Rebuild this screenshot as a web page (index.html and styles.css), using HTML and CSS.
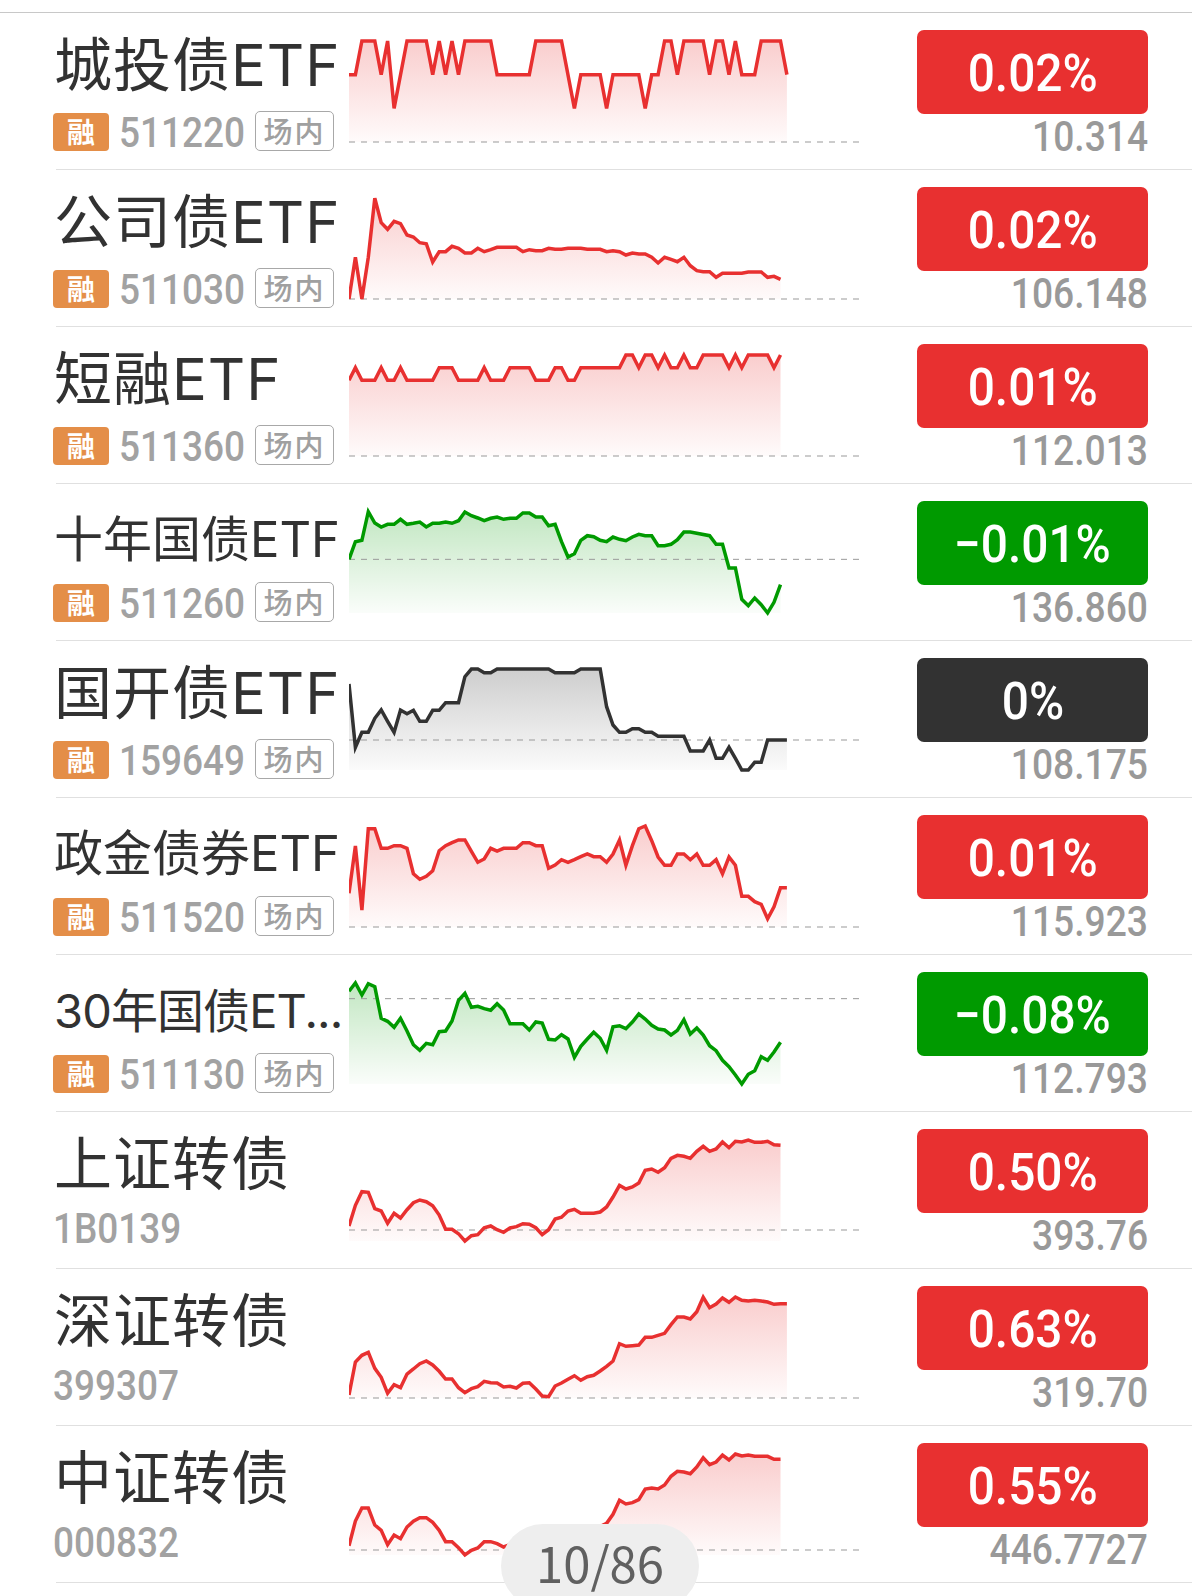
FILE: index.html
```html
<!DOCTYPE html>
<html lang="zh-CN">

<head>
    <meta charset="UTF-8">
    <meta name="viewport" content="width=device-width, initial-scale=1.0">
    <title>债券ETF</title>
    <link rel="stylesheet" href="styles.css">
</head>

<body>
    <div class="list" id="list"></div>
    <div class="pager">10/86</div>

    <script src="script.js"></script>
</body>

</html>
```

FILE: styles.css
```css
body {
    margin: 0;
    height: 1596px;
    overflow: hidden;
    background: #fff;
    font-family: "Noto Sans CJK SC", sans-serif;
}

.list {
    margin-top: 12px;
    border-top: 1px solid #c8c8c8;
}

.row {
    display: flex;
    box-sizing: border-box;
    height: 157px;
    margin-left: 56px;
    border-bottom: 1px solid #e0e0e0;
}

.info {
    width: 293px;
    flex: none;
}

.name {
    height: 80px;
    margin: 12px 0 0 -2px;
    line-height: 80px;
    font-family: Inter, "Noto Sans CJK SC", sans-serif;
    font-size: 58px;
    letter-spacing: 1px;
    color: #323232;
    white-space: nowrap;
}

.name.medium {
    font-size: 49px;
    line-height: 88px;
    letter-spacing: 0;
}

.name.small {
    font-size: 47px;
    line-height: 87px;
    letter-spacing: -0.9px;
}

.meta {
    display: flex;
    align-items: flex-end;
    height: 40px;
    margin: 6px 0 0 -3px;
}

.margin-badge {
    width: 56px;
    height: 38px;
    line-height: 36px;
    border-radius: 4px;
    background: #e48e48;
    color: #fff;
    font-size: 28px;
    font-weight: bold;
    text-align: center;
}

.code {
    width: 146px;
    height: 40px;
    line-height: 38px;
    font-family: Roboto, sans-serif;
    font-size: 42px;
    font-weight: 500;
    color: #a2a2a2;
}

.code span,
.price span,
.change span {
    display: inline-block;
    transform: scaleX(0.88);
    transform-origin: left;
}

.margin-badge + .code {
    padding-left: 10px;
    width: 136px;
    line-height: 44px;
}

.market-tag {
    box-sizing: border-box;
    width: 79px;
    height: 40px;
    line-height: 36px;
    border: 1px solid #a8a8a8;
    border-radius: 5px;
    color: #a0a0a0;
    font-size: 29px;
    font-weight: 500;
    letter-spacing: 2px;
    text-align: center;
}

.chart {
    flex: none;
    width: 511px;
    height: 156px;
}

.chart .line {
    fill: none;
    stroke: currentColor;
    stroke-width: 3.5;
}

.chart .base {
    stroke: #999;
    stroke-width: 1;
    stroke-dasharray: 6 6;
}

.up .chart {
    color: #e83030;
}

.down .chart {
    color: #009a00;
}

.flat .chart {
    color: #323232;
}

.quote {
    width: 231px;
    margin: 17px 44px 0 auto;
}

.change {
    height: 84px;
    line-height: 87px;
    border-radius: 7px;
    color: #fff;
    font-family: Roboto, sans-serif;
    font-size: 52px;
    font-weight: 500;
    text-align: center;
}

.change span {
    transform: scaleX(0.92);
    transform-origin: center;
}

.up .change {
    background: #e83030;
}

.down .change {
    background: #009a00;
}

.flat .change {
    background: #323232;
}

.price {
    line-height: 46px;
    font-family: Roboto, sans-serif;
    font-size: 42px;
    font-weight: 500;
    color: #999;
    text-align: right;
}

.price span {
    transform: scaleX(0.885);
    transform-origin: right;
}

/* Position indicator floating over the list */
.pager {
    position: fixed;
    left: 501px;
    top: 1524px;
    box-sizing: border-box;
    width: 198px;
    height: 84px;
    padding-top: 13px;
    line-height: 50px;
    border-radius: 42px;
    background: #eee;
    color: #606060;
    font-size: 49px;
    text-align: center;
}
```

FILE: script.js
```js
// Each point is "index,value"; values run from 0 (chart floor) to 303
const rows = [
    {
        name: '城投债ETF', code: '511220', tag: true, trend: 'up', change: '0.02%', price: '10.314', base: 0,
        points: '0,202 1,202 2,303 4,303 5,202 6,303 7,101 9,303 12,303 13,202 14,303 15,202 16,303 17,202 18,303 22,303 23,202 28,202 29,303 33,303 35,101 36,202 39,202 40,101 41,202 45,202 46,101 47,202 48,202 49,303 50,303 51,202 52,303 55,303 56,202 57,303 58,303 59,202 60,303 61,202 63,202 64,303 67,303 68,202'
    },
    {
        name: '公司债ETF', code: '511030', tag: true, trend: 'up', change: '0.02%', price: '106.148', base: 0,
        points: '0,0 1,125 2,0 3,125 4,302 5,229 6,209 7,233 8,226 9,192 10,186 11,169 12,166 13,111 14,142 15,142 16,158 17,152 18,138 19,138 20,152 21,142 22,148 23,155 26,155 27,142 28,148 29,145 30,145 31,152 32,149 33,149 34,152 36,152 37,149 39,149 40,142 41,145 42,142 43,132 44,138 45,135 46,135 47,125 48,108 49,125 50,119 51,112 52,125 53,100 54,85 55,82 56,82 57,65 58,77 61,77 62,81 64,81 65,65 66,68 67,59'
    },
    {
        name: '短融ETF', code: '511360', tag: true, trend: 'up', change: '0.01%', price: '112.013', base: 0,
        points: '0,227 1,265 2,227 4,227 5,265 6,227 7,227 8,265 9,227 13,227 14,265 16,265 17,227 20,227 21,265 22,227 24,227 25,265 28,265 29,227 31,227 32,265 33,265 34,227 35,227 36,265 42,265 43,303 44,303 45,265 46,303 47,303 48,265 49,303 50,265 51,265 52,303 53,265 54,265 55,303 58,303 59,265 60,303 61,265 62,303 65,303 66,265 67,303'
    },
    {
        name: '十年国债ETF', size: 'medium', code: '511260', tag: true, trend: 'down', change: '−0.01%', price: '136.860', base: 161,
        points: '0,161 1,214 2,218 3,304 4,270 5,258 6,266 7,266 8,281 9,266 10,269 11,273 12,258 13,269 14,269 15,273 16,269 17,277 18,303 19,292 20,285 21,277 22,284 23,288 24,281 25,284 26,284 27,300 28,300 29,288 30,288 31,262 32,266 33,214 34,168 35,178 36,218 37,232 38,229 39,218 40,214 41,228 42,221 43,217 44,228 45,236 46,232 47,232 48,202 49,202 50,206 51,220 52,243 53,243 56,232 57,206 58,206 59,135 60,135 61,41 62,22 63,45 64,25 65,0 66,32 67,85'
    },
    {
        name: '国开债ETF', code: '159649', tag: true, trend: 'flat', change: '0%', price: '108.175', base: 90,
        points: '0,258 1,68 2,113 3,113 4,155 5,180 6,146 7,113 8,180 9,169 10,179 11,146 12,146 13,179 14,179 15,202 17,202 18,280 19,303 20,303 21,292 22,292 23,303 31,303 32,292 35,292 36,303 39,303 40,190 41,135 42,113 43,113 44,124 45,124 46,113 47,113 48,101 52,101 53,57 55,57 56,90 57,35 58,35 59,68 60,35 61,0 62,0 63,23 64,23 65,90 68,90'
    },
    {
        name: '政金债券ETF', size: 'medium', code: '511520', tag: true, trend: 'up', change: '0.01%', price: '115.923', base: 0,
        points: '0,101 1,243 2,51 3,295 4,295 5,236 6,236 7,244 8,244 9,236 10,160 11,143 12,152 13,169 14,229 15,244 16,253 17,261 18,261 19,227 20,194 21,204 22,236 23,228 24,236 26,236 27,253 28,253 29,244 30,244 31,176 32,186 33,202 34,194 35,202 36,211 37,219 38,211 39,211 40,194 41,219 42,261 43,185 44,244 45,295 46,303 47,259 48,210 49,185 50,185 51,219 52,219 53,202 54,219 55,185 56,185 57,202 58,160 59,210 60,185 61,92 62,92 63,76 64,68 65,25 66,61 67,118 68,118'
    },
    {
        name: '30年国债ET...', size: 'small', code: '511130', tag: true, trend: 'down', change: '−0.08%', price: '112.793', base: 256,
        points: '0,278 1,303 2,267 3,301 4,292 5,197 6,188 7,170 8,197 9,159 10,118 11,101 12,122 13,118 14,157 15,159 16,189 17,251 18,272 19,230 20,233 21,226 22,221 23,241 24,222 25,181 27,181 28,162 29,186 30,183 31,134 32,132 33,148 34,135 35,80 36,113 37,135 38,155 39,137 40,101 41,172 42,175 43,166 44,186 45,210 46,195 47,176 48,165 49,162 50,147 51,161 52,193 53,150 54,168 55,147 56,115 57,100 58,71 59,52 60,27 61,0 62,29 63,40 64,82 65,71 66,96 67,125'
    },
    {
        name: '上证转债', code: '1B0139', trend: 'up', change: '0.50%', price: '393.76', base: 33,
        points: '0,45 1,107 2,148 3,146 4,97 5,90 6,53 7,83 8,69 9,94 10,115 11,123 12,118 13,106 14,78 15,35 16,35 17,22 18,0 19,16 20,19 21,40 22,45 23,34 24,26 25,39 26,43 27,52 28,50 29,40 30,19 31,34 32,66 33,71 34,90 35,95 36,83 38,83 39,87 40,102 41,132 42,167 43,156 44,162 45,174 46,212 47,216 48,206 49,220 50,248 51,257 52,254 53,248 54,269 55,284 56,269 57,276 58,297 59,280 60,299 61,297 62,303 63,296 64,296 65,299 66,289 67,287'
    },
    {
        name: '深证转债', code: '399307', trend: 'up', change: '0.63%', price: '319.70', base: 0,
        points: '0,9 1,108 2,128 3,137 4,89 5,62 6,14 7,40 8,31 9,72 10,87 11,103 12,111 13,99 14,80 15,57 16,57 17,31 18,16 19,28 20,34 21,50 22,46 23,45 24,33 25,35 26,30 27,44 28,46 29,27 30,6 31,4 32,36 33,45 34,56 35,67 36,53 37,64 38,68 39,81 40,95 41,111 42,163 43,155 44,157 45,159 46,182 47,182 48,188 49,194 50,220 51,243 52,243 53,237 54,259 55,302 56,271 57,282 58,300 59,287 60,303 61,293 62,291 63,293 64,291 65,288 66,281 67,283 68,283'
    },
    {
        name: '中证转债', code: '000832', trend: 'up', change: '0.55%', price: '446.7727', base: 15,
        points: '0,28 1,102 2,141 3,141 4,90 5,74 6,31 7,60 8,49 9,84 10,101 11,112 12,112 13,98 14,74 15,40 16,40 17,22 18,0 19,14 20,21 21,40 22,40 23,34 24,24 27,45 30,14 34,70 38,76 40,95 41,122 42,164 43,153 44,157 45,166 46,198 47,201 48,198 49,210 50,236 51,251 52,249 53,244 54,264 55,292 56,271 57,279 58,300 59,285 60,303 61,297 62,300 63,296 65,296 66,287 67,287'
    }
];

const STEP = 6.44;
const TOP = 28;
const FLOOR = 129;

// Value to pixel position inside the row
function toY(value) {
    return FLOOR - value / 3;
}

function drawChart(row, index) {
    const points = row.points.split(' ').map(pair => {
        const [i, value] = pair.split(',').map(Number);
        return [(i * STEP).toFixed(1), toY(value).toFixed(1)];
    });
    const line = points.map(p => p.join(',')).join(' ');
    const lastX = points[points.length - 1][0];

    return `
        <svg class="chart" viewBox="0 0 511 156">
            <defs>
                <linearGradient id="fill-${index}" gradientUnits="userSpaceOnUse" x1="0" y1="${TOP}" x2="0" y2="${FLOOR}">
                    <stop offset="0" stop-color="currentColor" stop-opacity="0.24"/>
                    <stop offset="1" stop-color="currentColor" stop-opacity="0.02"/>
                </linearGradient>
            </defs>
            <polygon points="0,${FLOOR} ${line} ${lastX},${FLOOR}" fill="url(#fill-${index})"/>
            <line class="base" x1="0" y1="${toY(row.base)}" x2="511" y2="${toY(row.base)}"/>
            <polyline class="line" points="${line}"/>
        </svg>
    `;
}

document.getElementById('list').innerHTML = rows.map((row, index) => `
    <div class="row ${row.trend}">
        <div class="info">
            <div class="name ${row.size || ''}">${row.name}</div>
            <div class="meta">
                ${row.tag ? '<div class="margin-badge">融</div>' : ''}
                <div class="code"><span>${row.code}</span></div>
                ${row.tag ? '<div class="market-tag">场内</div>' : ''}
            </div>
        </div>
        ${drawChart(row, index)}
        <div class="quote">
            <div class="change"><span>${row.change}</span></div>
            <div class="price"><span>${row.price}</span></div>
        </div>
    </div>
`).join('');
```
